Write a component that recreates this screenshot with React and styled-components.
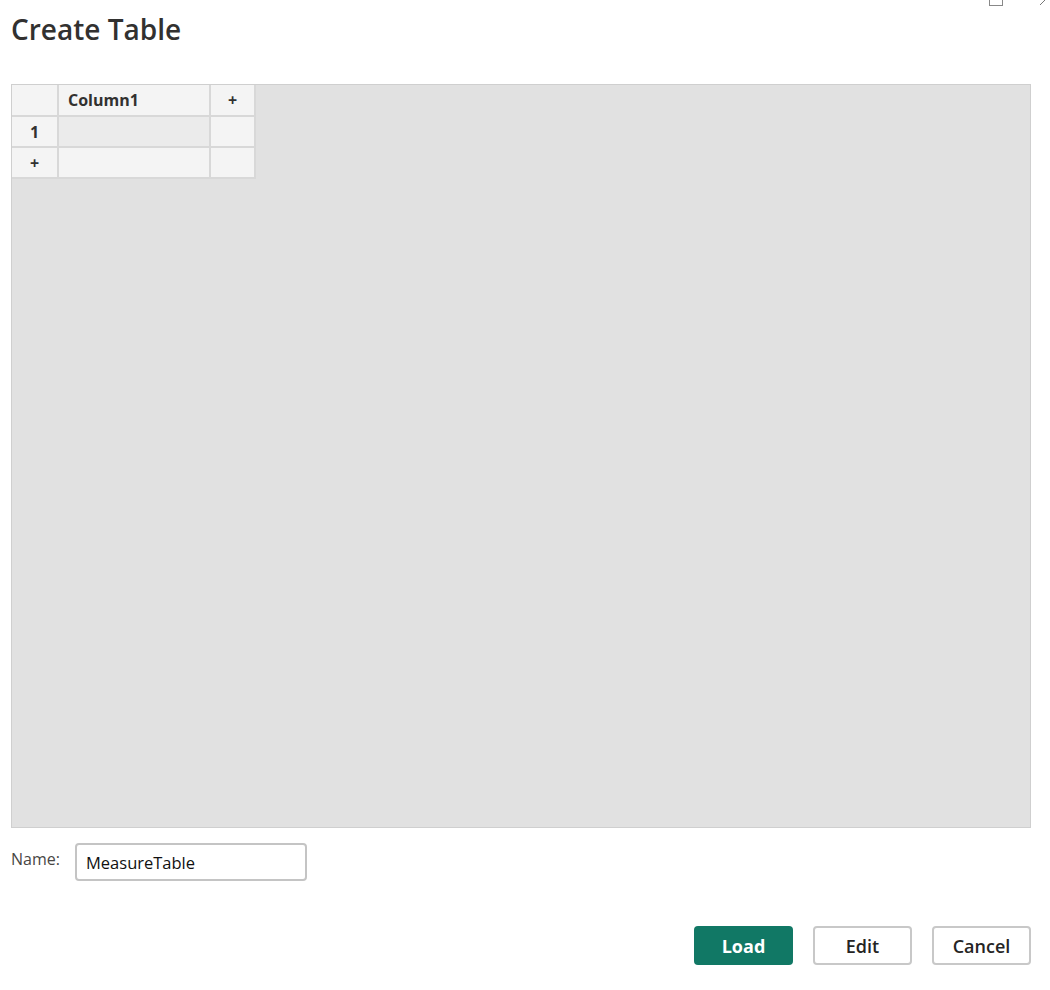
import React from 'react'
import styled, { createGlobalStyle } from 'styled-components'

const GlobalStyle = createGlobalStyle`
    body {
        margin: 0;
        background: #fff;
        font-family: "Segoe UI", "Open Sans", "Noto Sans", sans-serif;
        color: #252423;
    }
`

const App = () => {
    return (
        <>
            <GlobalStyle />
            <Dialog>
                <WindowControls>
                    <MaxIcon />
                    <CloseIcon width="10" height="8" viewBox="0 0 10 8">
                        <path d="M0 8 L8 0" stroke="#777" strokeWidth="1" fill="none" />
                    </CloseIcon>
                </WindowControls>
                <Title>Create Table</Title>
                <GridArea>
                    <Table>
                        <tbody>
                            <tr>
                                <Cell $w={46} $head></Cell>
                                <Cell $w={152} $head $left>Column1</Cell>
                                <Cell $w={45} $head>+</Cell>
                            </tr>
                            <tr>
                                <Cell $head>1</Cell>
                                <Cell $dark></Cell>
                                <Cell></Cell>
                            </tr>
                            <tr>
                                <Cell $head>+</Cell>
                                <Cell></Cell>
                                <Cell></Cell>
                            </tr>
                        </tbody>
                    </Table>
                </GridArea>
                <NameRow>
                    <Label htmlFor="name">Name:</Label>
                    <Input id="name" defaultValue="MeasureTable" />
                </NameRow>
                <Footer>
                    <Button $primary>Load</Button>
                    <Button>Edit</Button>
                    <Button>Cancel</Button>
                </Footer>
            </Dialog>
        </>
    )
}

const Dialog = styled.div`
    position: relative;
    width: 1050px;
    height: 990px;
    padding: 0 19px 0 11px;
    box-sizing: border-box;
    display: flex;
    flex-direction: column;
`

const WindowControls = styled.div`
    position: absolute;
    top: -8px;
    right: 0;
    display: flex;
    align-items: flex-end;
    gap: 37px;
`

const MaxIcon = styled.div`
    width: 12px;
    height: 12px;
    border: 1px solid #888;
`

const CloseIcon = styled.svg`
    display: block;
    margin-bottom: 1px;
`

const Title = styled.h1`
    margin: 11px 0 0;
    font-size: 28px;
    font-weight: 600;
    line-height: 36px;
    color: #323130;
`

const GridArea = styled.div`
    margin-top: 37px;
    height: 744px;
    background: #e1e1e1;
    border: 1px solid #cfcfcf;
    box-sizing: border-box;
`

const Table = styled.table`
    border-collapse: collapse;
    table-layout: fixed;
    margin: 0;
`

const Cell = styled.td`
    width: ${p => (p.$w ? `${p.$w}px` : 'auto')};
    height: 31px;
    padding: 0 0 0 ${p => (p.$left ? '9px' : '0')};
    border: 2px solid #d8d8d8;
    background: ${p => (p.$dark ? '#ebebeb' : '#f4f4f4')};
    text-align: ${p => (p.$left ? 'left' : 'center')};
    font-size: 16px;
    font-weight: 700;
    color: #323130;
    box-sizing: border-box;
    &:first-child {
        border-left: none;
    }
    tr:first-child & {
        border-top: none;
    }
`

const NameRow = styled.div`
    margin-top: 15px;
    display: flex;
    align-items: flex-start;
    gap: 12px;
`

const Label = styled.label`
    width: 52px;
    margin-top: 5px;
    font-size: 16px;
    color: #484644;
`

const Input = styled.input`
    width: 232px;
    height: 38px;
    box-sizing: border-box;
    padding: 0 9px;
    border: 2px solid #c4c4c4;
    border-radius: 4px;
    font-family: inherit;
    font-size: 16.5px;
    color: #111;
    outline: none;
`

const Footer = styled.div`
    margin-top: 45px;
    display: flex;
    justify-content: flex-end;
    gap: 20px;
`

const Button = styled.button`
    width: 99px;
    height: 39px;
    border-radius: 4px;
    font-family: inherit;
    font-size: 18px;
    font-weight: ${p => (p.$primary ? 700 : 600)};
    color: ${p => (p.$primary ? '#fff' : '#252423')};
    background: ${p => (p.$primary ? '#117865' : '#fff')};
    border: ${p => (p.$primary ? 'none' : '2px solid #c8c8c8')};
    cursor: pointer;
`

export default App
